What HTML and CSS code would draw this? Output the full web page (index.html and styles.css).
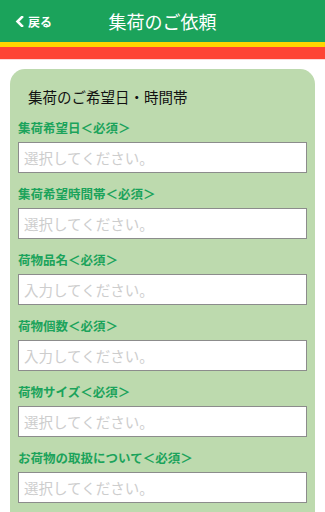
FILE: index.html
```html
<!DOCTYPE HTML>
<html lang="ja">
<head>
	<meta charset="utf-8" />
	<meta name="viewport" content="width=device-width, initial-scale=1" />
	<title>集荷のご依頼</title>

	<link rel="stylesheet" href="styles.css">

</head>

<body>

	<div id="header">
		<a href="#" class="back_link">
			<svg class="back_icon" width="9" height="11" viewBox="0 0 9 11">
				<path d="M7 1 L2.5 5.5 L7 10" fill="none" stroke="#fff" stroke-width="2.6" stroke-linecap="square" />
			</svg>
			<span>戻る</span>
		</a>
		<h1 class="page_title">集荷のご依頼</h1>
		<span></span>
	</div>
	<div class="band_yellow"></div>
	<div class="band_red"></div>

	<div class="panel">
		<h2 class="panel_title">集荷のご希望日・時間帯</h2>

		<div class="field">
			<label class="field_label">集荷希望日＜必須＞</label>
			<input type="text" class="field_input" placeholder="選択してください。" readonly>
		</div>
		<div class="field">
			<label class="field_label">集荷希望時間帯＜必須＞</label>
			<input type="text" class="field_input" placeholder="選択してください。" readonly>
		</div>
		<div class="field">
			<label class="field_label">荷物品名＜必須＞</label>
			<input type="text" class="field_input" placeholder="入力してください。">
		</div>
		<div class="field">
			<label class="field_label">荷物個数＜必須＞</label>
			<input type="text" class="field_input" placeholder="入力してください。">
		</div>
		<div class="field">
			<label class="field_label">荷物サイズ＜必須＞</label>
			<input type="text" class="field_input" placeholder="選択してください。" readonly>
		</div>
		<div class="field">
			<label class="field_label">お荷物の取扱について＜必須＞</label>
			<input type="text" class="field_input" placeholder="選択してください。" readonly>
		</div>
	</div>

</body>
</html>
```

FILE: styles.css
```css
html{
	scrollbar-width: none;
}

body{
	margin: 0;
	padding: 0;
	background-color: #fff;
	font-family: "Noto Sans CJK JP", "Noto Sans", sans-serif;
}

#header{
	display: grid;
	grid-template-columns: 1fr auto 1fr;
	align-items: center;
	height: 42px;
	background-color: #1ba35b;
	color: #fff;
}
	.back_link{
		display: flex;
		align-items: center;
		gap: 4px;
		padding-left: 15px;
		color: #fff;
		font-size: 12px;
		font-weight: bold;
		text-decoration: none;
	}

	.page_title{
		margin: 0;
		font-size: 18px;
		font-weight: normal;
		line-height: 42px;
	}

.band_yellow{
	height: 5px;
	background-color: #fed600;
}

.band_red{
	height: 12px;
	background-color: #fe4535;
	border-bottom: 1px solid #fcdada;
}

.panel{
	margin: 9px 10px 0 10px;
	padding: 18px 8px 20px 8px;
	background-color: #bddaae;
	border-radius: 15px 15px 0 0;
}
	.panel_title{
		margin: 0 0 13px 10px;
		font-size: 14.5px;
		font-weight: normal;
		line-height: 20px;
		color: #111;
	}

	.field{
		display: flex;
		flex-direction: column;
		margin-bottom: 13px;
	}

	.field_label{
		margin-bottom: 6px;
		font-size: 12.5px;
		font-weight: bold;
		line-height: 16px;
		color: #1ba35b;
	}

	.field_input{
		box-sizing: border-box;
		width: 100%;
		height: 31px;
		margin: 0;
		padding: 0 5px;
		border: 1px solid #8c8c8c;
		border-radius: 0;
		background-color: #fff;
		font-family: "Noto Sans CJK JP", "Noto Sans", sans-serif;
		font-size: 14.5px;
		color: #333;
		outline: none;
	}

	.field_input::placeholder{
		color: #cdcdcd;
	}
```
